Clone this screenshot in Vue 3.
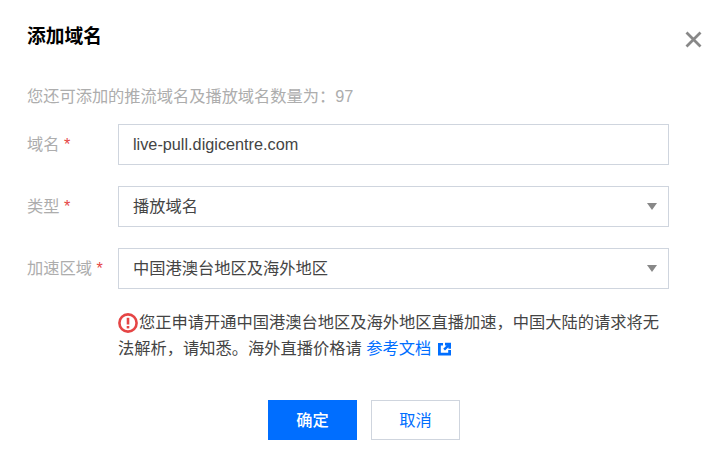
<script setup>
const rows = [
  { label: '域名', value: 'live-pull.digicentre.com', select: false },
  { label: '类型', value: '播放域名', select: true },
  { label: '加速区域', value: '中国港澳台地区及海外地区', select: true },
]
</script>

<template>
  <div class="dialog">
    <header class="head">
      <h3 class="title">添加域名</h3>
      <button class="close" aria-label="关闭">
        <svg width="17" height="17" viewBox="0 0 17 17">
          <path d="M1.5 1.5L15.5 15.5M15.5 1.5L1.5 15.5" stroke="#888" stroke-width="2.8" fill="none" />
        </svg>
      </button>
    </header>
    <p class="quota">您还可添加的推流域名及播放域名数量为：97</p>
    <div class="form">
      <div v-for="r in rows" :key="r.label" class="row">
        <label class="label">{{ r.label }} <span class="req">*</span></label>
        <div class="field">
          <span :class="{ lifted: r.select }">{{ r.value }}</span>
          <i v-if="r.select" class="caret"></i>
        </div>
      </div>
    </div>
    <div class="notice">
      <svg class="warn" width="20" height="20" viewBox="0 0 20 20">
        <circle cx="10" cy="10" r="8.6" fill="none" stroke="#e54545" stroke-width="2.6" />
        <path d="M10 4.8v6.7" stroke="#e54545" stroke-width="2.6" fill="none" />
        <path d="M10 13v2.4" stroke="#e54545" stroke-width="2.6" fill="none" />
      </svg>您正申请开通中国港澳台地区及海外地区直播加速，中国大陆的请求将无法解析，请知悉。海外直播价格请 <a class="link">参考文档<svg class="ext" width="15" height="14" viewBox="0 0 15 14"><path d="M6 1H1v12.5h13V8h-2.8v2.8H3.8V3.6H6z" fill="#006eff" /><path d="M8 .8h6v6h-2.6V5.2L8 8.6 6.2 6.8 9.6 3.4H8z" fill="#006eff" /></svg></a>
    </div>
    <footer class="foot">
      <button class="btn primary">确定</button>
      <button class="btn">取消</button>
    </footer>
  </div>
</template>

<style scoped>
.dialog {
  width: 728px;
  height: 452px;
  box-sizing: border-box;
  padding: 24px 59px 0 27px;
  background: #fff;
  font-family: "Liberation Sans", "Noto Sans CJK SC", sans-serif;
  font-size: 16.25px;
  color: #444;
  overflow: hidden;
}
.head {
  display: flex;
  justify-content: space-between;
  align-items: flex-start;
  margin-right: -33px;
  height: 26px;
}
.title {
  margin: 0;
  font-size: 18.75px;
  line-height: 26px;
  font-weight: 700;
  color: #000;
}
.close {
  padding: 0;
  border: 0;
  background: none;
  margin: 7px 0 0;
  width: 17px;
  height: 17px;
}
.quota {
  margin: 35px 0 0;
  line-height: 22px;
  letter-spacing: -0.03px;
  color: #adadad;
}
.form {
  margin-top: 17px;
  display: flex;
  flex-direction: column;
  gap: 21px;
}
.row {
  display: flex;
  align-items: center;
}
.label {
  width: 91px;
  flex: none;
  padding-bottom: 3px;
  color: #adadad;
}
.req {
  color: #e54545;
}
.field {
  flex: 1;
  height: 41px;
  box-sizing: border-box;
  border: 1px solid #cfd5de;
  padding: 0 14px;
  display: flex;
  align-items: center;
  justify-content: space-between;
  color: #444;
}
.lifted {
  padding-bottom: 3px;
}
.caret {
  width: 0;
  height: 0;
  border-left: 5.5px solid transparent;
  border-right: 5.5px solid transparent;
  border-top: 7px solid #888;
  margin-right: -3px;
}
.notice {
  margin: 20px 0 0 91px;
  line-height: 26px;
  width: 551px;
  color: #444;
}
.warn {
  vertical-align: -5px;
  margin-right: 1px;
}
.link {
  color: #006eff;
}
.ext {
  vertical-align: -2px;
  margin-left: 6px;
}
.foot {
  margin-top: 39px;
  margin-left: 241px;
  display: flex;
  gap: 14px;
}
.btn {
  width: 89px;
  height: 40px;
  box-sizing: border-box;
  border: 1px solid #cfd5de;
  background: #fff;
  color: #006eff;
  font: inherit;
  padding: 0 0 2px;
}
.primary {
  background: #006eff;
  border-color: #006eff;
  color: #fff;
  font-weight: 500;
}
</style>
